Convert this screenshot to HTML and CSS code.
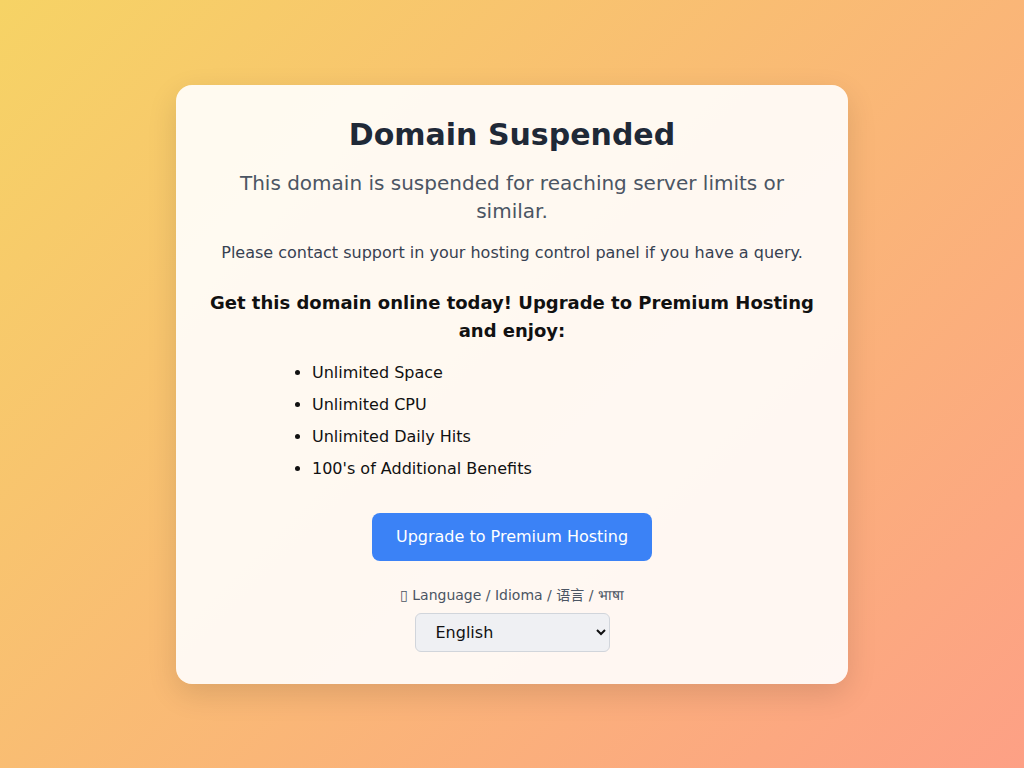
FILE: index.html
```html
<!DOCTYPE html>
<html lang="en">
<head>
    <meta charset="UTF-8">
    <meta name="viewport" content="width=device-width, initial-scale=1.0">
    <title>Domain Suspended</title>
    <link rel="stylesheet" href="styles.css">
</head>
<body>
    <main class="card">
        <h1>Domain Suspended</h1>
        <p class="lead">This domain is suspended for reaching server limits or similar.</p>
        <p class="note">Please contact support in your hosting control panel if you have a query.</p>

        <h2>Get this domain online today! Upgrade to Premium Hosting and enjoy:</h2>
        <ul class="benefits">
            <li>Unlimited Space</li>
            <li>Unlimited CPU</li>
            <li>Unlimited Daily Hits</li>
            <li>100's of Additional Benefits</li>
        </ul>

        <a class="upgrade" href="#">Upgrade to Premium Hosting</a>

        <div class="language">
            <label for="lang">▯ Language / Idioma / 语言 / भाषा</label>
            <select id="lang">
                <option>English</option>
                <option>Español</option>
                <option>中文</option>
                <option>हिन्दी</option>
            </select>
        </div>
    </main>
</body>
</html>
```

FILE: styles.css
```css
:root {
    --heading: #1f2937;
    --muted: #4b5563;
    --text: #374151;
    --primary: #3b82f6;
}
* {
    box-sizing: border-box;
}
body {
    margin: 0;
    min-height: 100vh;
    font-family: "DejaVu Sans", "Noto Sans CJK SC", sans-serif;
    background: linear-gradient(135deg, #f6d365 0%, #fda085 100%);
    display: flex;
    justify-content: center;
    align-items: flex-start;
    padding-top: 85px;
}
.card {
    width: 672px;
    padding: 32px;
    background: rgba(255, 255, 255, 0.9);
    border-radius: 16px;
    box-shadow: 0 10px 30px rgba(0, 0, 0, 0.12);
    text-align: center;
}
h1 {
    margin: 0 0 16px;
    font-size: 30px;
    line-height: 36px;
    color: var(--heading);
}
.lead {
    margin: 0 0 16px;
    font-size: 20px;
    line-height: 28px;
    color: var(--muted);
}
.note {
    margin: 0 0 24px;
    font-size: 16px;
    line-height: 24px;
    color: var(--text);
}
h2 {
    margin: 0 0 16px;
    font-size: 18px;
    line-height: 28px;
    color: #111;
}
.benefits {
    max-width: 400px;
    margin: 0 auto 32px;
    padding: 0;
    text-align: left;
    color: #111;
}
.benefits li {
    font-size: 16px;
    line-height: 24px;
    margin-bottom: 8px;
}
.benefits li:last-child {
    margin-bottom: 0;
}
.upgrade {
    display: inline-block;
    background-color: var(--primary);
    color: white;
    text-decoration: none;
    padding: 12px 24px;
    border-radius: 8px;
    font-size: 16px;
    line-height: 24px;
}
.language {
    margin-top: 24px;
    display: flex;
    flex-direction: column;
    align-items: center;
    gap: 8px;
}
.language label {
    font-size: 14px;
    line-height: 20px;
    color: var(--muted);
}
.language select {
    width: 195px;
    height: 39px;
    padding: 0 12px 0 16px;
    font-family: "DejaVu Sans", sans-serif;
    font-size: 16px;
    color: #111;
    background-color: #eff0f3;
    border: 1px solid #d1d5db;
    border-radius: 6px;
}
```
